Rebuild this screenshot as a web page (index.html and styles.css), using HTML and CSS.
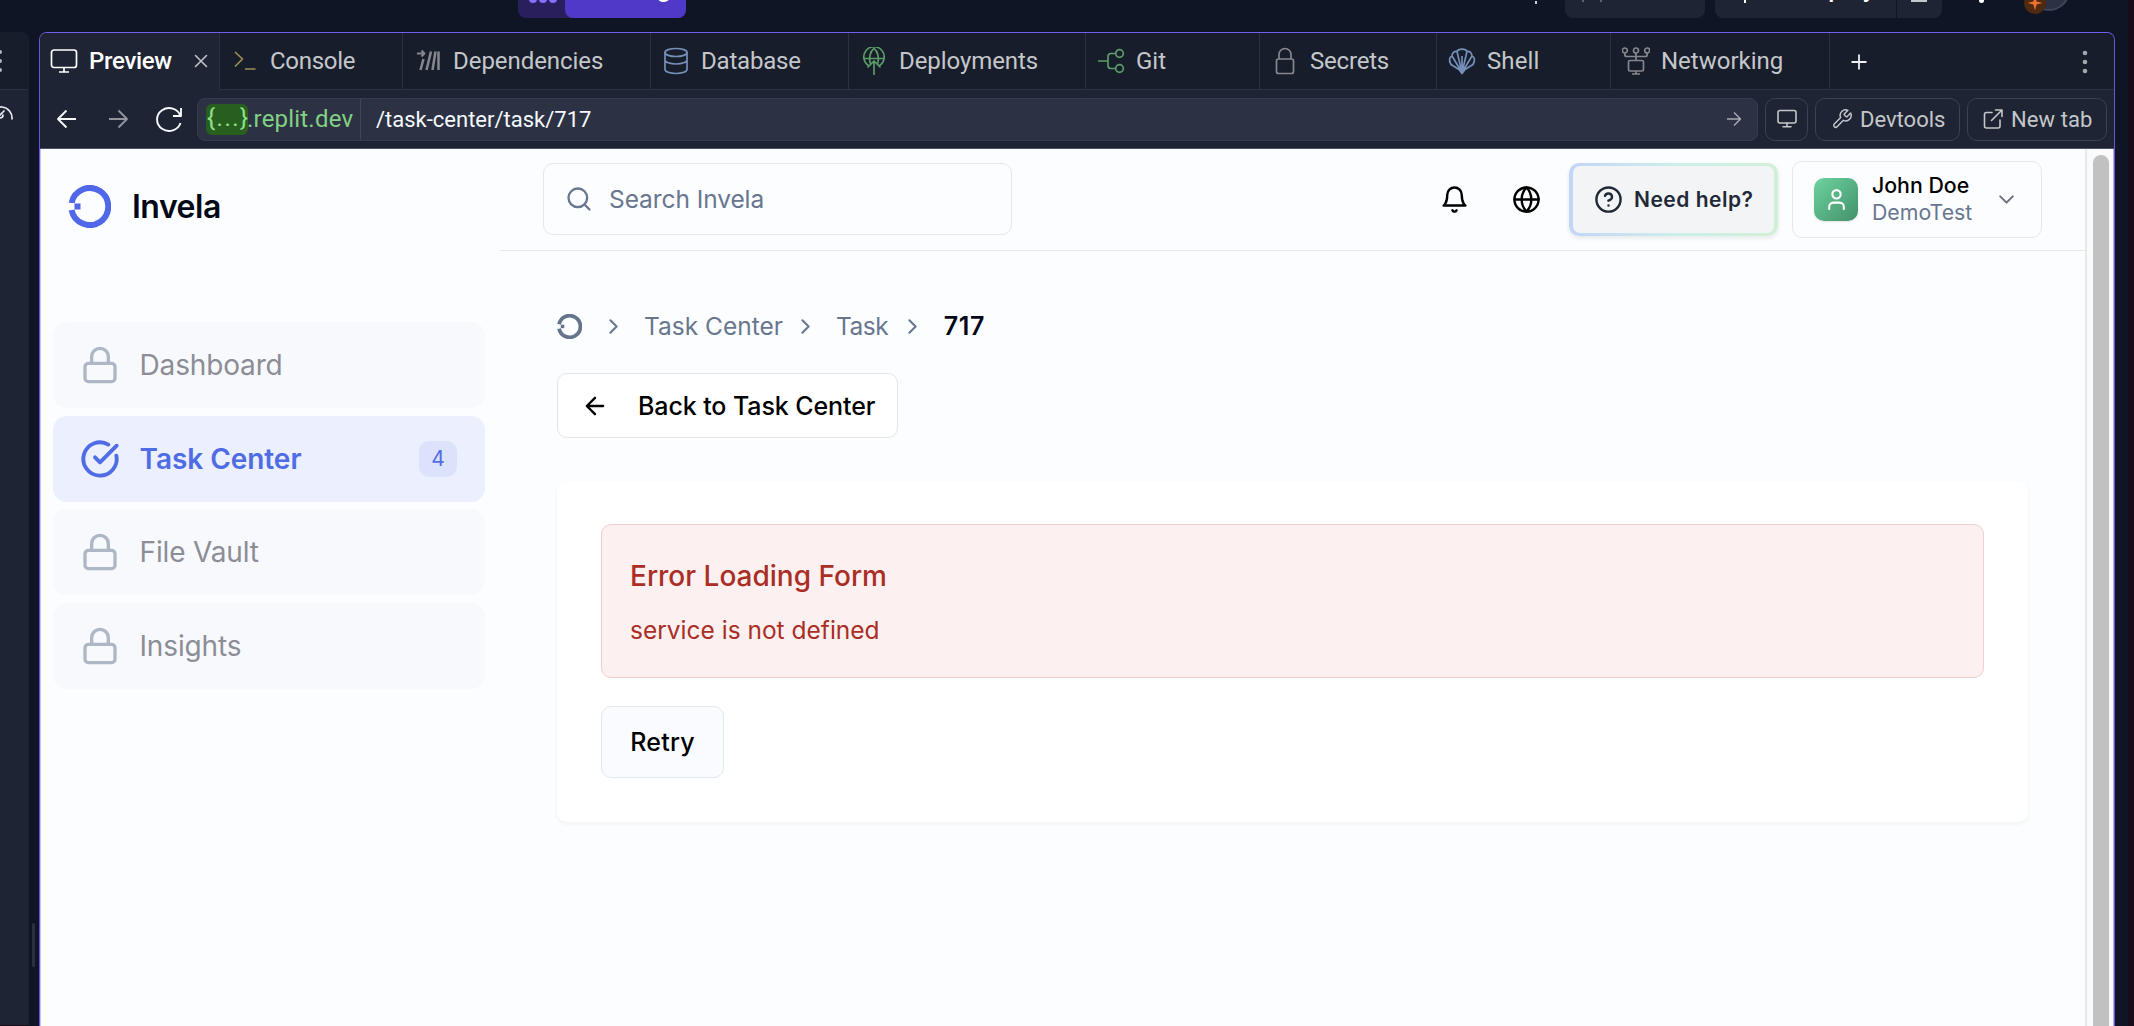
FILE: index.html
```html
<!DOCTYPE html>
<html lang="en">
<head>
<meta charset="utf-8">
<title>Invela</title>
<link rel="stylesheet" href="styles.css">
</head>
<body>
<header class="topbar">
  <div class="run">
    <span class="run-dots"><i></i><i></i><i></i></span>
    <span class="run-label">Running</span>
  </div>
  <span class="top-tick"></span>
  <div class="top-btn invite"><span class="tick"></span><span class="tick"></span></div>
  <div class="top-btn deploy"><span class="stem"></span><span class="deploy-label">Deploy</span></div>
  <div class="top-btn layout"><span class="bar"></span></div>
  <span class="top-dot"></span>
  <div class="account">
    <span class="account-face"></span>
    <svg class="account-badge" width="22" height="22" viewBox="0 0 22 22"><circle cx="11" cy="11" r="11" fill="#4d2a10"/><path d="M11 3.500l1.600 5.900 5.900 1.600-5.900 1.600L11 18.500l-1.600-5.900L3.500 11l5.900-1.600z" fill="#f0702e"/></svg>
  </div>
</header>

<div class="workspace">
  <aside class="dock">
    <div class="dock-head"><i></i><i></i><i></i></div>
    <svg class="dock-icon" width="13" height="20" viewBox="0 0 13 20"><path d="M-10 12a11 11 0 0 1 22 2M-4 14L4 6M0 13c2 0 3-1 3-3"/></svg>
  </aside>
  <div class="gutter"><span class="handle"></span></div>

  <section class="pane">
    <nav class="tabs">
      <div class="tab active t-preview">
        <svg class="ti" viewBox="0 0 28 28"><rect x="1.500" y="3" width="25" height="17.500" rx="2.500"/><path d="M14 20.500v4.500M9 25h10"/></svg>
        <span class="s-preview">Preview</span>
        <svg class="close" viewBox="0 0 14 14"><path d="M1.500 1.500l11 11M12.500 1.500l-11 11"/></svg>
      </div>
      <div class="tab t-console">
        <svg class="ti olive" viewBox="0 0 28 28"><path d="M4 5l7.500 7L4 19.500M14 22h10.500"/></svg>
        <span class="s-console">Console</span>
      </div>
      <div class="tab t-deps">
        <svg class="ti gray" viewBox="0 0 28 28"><path stroke-width="1.800" d="M3 6.500h7M7.500 3.500l3 3-3 3"/><path stroke-width="2.500" d="M9.500 12L6.500 23M17 4.500L12.500 23M21.500 4.500L18.500 23M24.500 4.500V23"/></svg>
        <span class="s-deps">Dependencies</span>
      </div>
      <div class="tab t-db">
        <svg class="ti blue" viewBox="0 0 28 28"><ellipse cx="14" cy="5.500" rx="11" ry="4"/><path d="M3 5.500v17c0 2.200 4.900 4 11 4s11-1.800 11-4v-17M3 13c0 2.200 4.900 4 11 4s11-1.800 11-4"/></svg>
        <span class="s-db">Database</span>
      </div>
      <div class="tab t-deploy">
        <svg class="ti green" viewBox="0 0 28 28"><path d="M8.500 18.500A10.200 10.200 0 1 1 19.500 18.500M4 11.500h20M10.300 16.500C8.600 10 10.500 4 14 1.300c3.500 2.700 5.400 8.700 3.700 15.200M14 14.500V28M7.500 20.500l6.500-6.500 6.500 6.500"/></svg>
        <span class="s-deploy">Deployments</span>
      </div>
      <div class="tab t-git">
        <svg class="ti green" viewBox="0 0 28 28"><circle cx="22.500" cy="6.500" r="3.800"/><circle cx="22.500" cy="21.500" r="3.800"/><path d="M1 14h10M18.700 6.500H14a3 3 0 0 0-3 3v9a3 3 0 0 0 3 3h4.700"/></svg>
        <span>Git</span>
      </div>
      <div class="tab t-secrets">
        <svg class="ti gray" viewBox="0 0 28 28"><rect x="5.500" y="12" width="17" height="14.500" rx="2"/><path d="M8 12V7.500a6 6 0 0 1 12 0V12"/></svg>
        <span class="s-secrets">Secrets</span>
      </div>
      <div class="tab t-shell">
        <svg class="ti blue" viewBox="0 0 28 28"><path d="M11 22.500L3 17.500C.5 13 1.500 10 4 9c.3-3 2-5 5-4.500C10.500 1.300 17.500 1.300 19 4.500c3-.5 4.700 1.500 5 4.500 2.500 1 3.500 4 1 8.500l-8 5L14 26.500zM14 25.500L4 9M14 25.500L9 4.500M14 25.500L19 4.500M14 25.500L24 9M14 25V9"/></svg>
        <span class="s-shell">Shell</span>
      </div>
      <div class="tab t-net">
        <svg class="ti gray" viewBox="0 0 28 28"><circle cx="2.800" cy="3.500" r="2.500"/><circle cx="14" cy="3.500" r="2.500"/><circle cx="25.200" cy="3.500" r="2.500"/><path d="M2.800 6v1.500a2 2 0 0 0 2 2h18.400a2 2 0 0 0 2-2V6M14 6v7.500M14 24v3M10 27h8"/><rect x="6.500" y="13.500" width="15" height="10.500" rx="1.500"/></svg>
        <span>Networking</span>
      </div>
      <svg class="plus" viewBox="0 0 18 18"><path d="M9 1.500v15M1.500 9h15"/></svg>
      <svg class="kebab" viewBox="0 0 6 24"><circle cx="3" cy="3" r="2.300"/><circle cx="3" cy="12" r="2.300"/><circle cx="3" cy="21" r="2.300"/></svg>
    </nav>

    <div class="toolbar">
      <span class="nav-btn"><svg width="22" height="22" viewBox="0 0 22 22"><path d="M20 11H2.500M10.500 2.500L2 11l8.500 8.500"/></svg></span>
      <span class="nav-btn dim"><svg width="22" height="22" viewBox="0 0 22 22"><path d="M2 11h17.500M11.500 2.500L20 11l-8.500 8.500"/></svg></span>
      <span class="nav-btn"><svg width="28" height="28" viewBox="0 0 28 28"><path d="M26 3v8h-8M25.500 11A12 11.500 0 1 0 25.500 18"/></svg></span>
      <div class="url">
        <div class="host"><span class="chip">{...}</span><span class="domain">.replit.dev</span></div>
        <span class="path">/task-center/task/717</span>
        <svg class="go" width="16" height="16" viewBox="0 0 16 16"><path d="M1 8h13.500M8 1.500L14.500 8 8 14.500"/></svg>
      </div>
      <div class="tool device"><svg width="22" height="22" viewBox="0 0 22 22"><rect x="2" y="2.500" width="18" height="12.500" rx="2"/><path d="M11 15v3.500M7 18.800h8"/></svg></div>
      <div class="tool devtools"><svg width="22" height="22" viewBox="0 0 24 24"><path d="M14.700 6.300a1 1 0 0 0 0 1.400l1.600 1.600a1 1 0 0 0 1.400 0l3.770-3.770a6 6 0 0 1-7.940 7.940l-6.910 6.910a2.120 2.120 0 0 1-3-3l6.910-6.910a6 6 0 0 1 7.940-7.940l-3.760 3.760z"/></svg><span>Devtools</span></div>
      <div class="tool newtab"><svg width="22" height="22" viewBox="0 0 22 22"><path d="M10 4.500H4.500a2 2 0 0 0-2 2V18a2 2 0 0 0 2 2H16a2 2 0 0 0 2-2v-6M13.500 2H20v6.500M20 2L9.500 12.500"/></svg><span>New tab</span></div>
    </div>

    <div class="page">
      <aside class="sidebar">
        <div class="brand">
          <svg width="43" height="43" viewBox="0 0 43 43"><path fill="none" stroke="#4f67e8" stroke-width="6" d="M3.600 18A18.500 18.500 0 1 1 3.600 25"/><path fill="#fcfdff" d="M0 18.300h6v6H0z"/><path fill="#4f67e8" d="M6.500 18.400h6v6h-6z"/></svg>
          <span>Invela</span>
        </div>
        <ul class="menu">
          <li><svg viewBox="0 0 24 24"><rect x="3" y="11" width="18" height="11" rx="2"/><path d="M7 11V7a5 5 0 0 1 10 0v4"/></svg><span>Dashboard</span></li>
          <li class="current"><svg viewBox="0 0 24 24"><path d="M21.801 10A10 10 0 1 1 17 3.335"/><path d="m9 11 3 3L22 4"/></svg><span>Task Center</span><b>4</b></li>
          <li><svg viewBox="0 0 24 24"><rect x="3" y="11" width="18" height="11" rx="2"/><path d="M7 11V7a5 5 0 0 1 10 0v4"/></svg><span>File Vault</span></li>
          <li><svg viewBox="0 0 24 24"><rect x="3" y="11" width="18" height="11" rx="2"/><path d="M7 11V7a5 5 0 0 1 10 0v4"/></svg><span>Insights</span></li>
        </ul>
      </aside>

      <main class="main">
        <header class="appbar">
          <div class="search">
            <svg width="28" height="28" viewBox="0 0 24 24"><circle cx="11" cy="11" r="8"/><path d="m21 21-4.300-4.300"/></svg>
            <span>Search Invela</span>
          </div>
          <svg class="bell" width="29" height="29" viewBox="0 0 24 24"><path d="M6 8a6 6 0 0 1 12 0c0 7 3 9 3 9H3s3-2 3-9"/><path d="M10.300 21a1.940 1.940 0 0 0 3.400 0"/></svg>
          <svg class="globe" width="29" height="29" viewBox="0 0 24 24"><circle cx="12" cy="12" r="10"/><path d="M12 2a14.500 14.500 0 0 0 0 20 14.500 14.500 0 0 0 0-20M2 12h20"/></svg>
          <div class="help">
            <div class="help-in">
              <svg width="29" height="29" viewBox="0 0 24 24"><circle cx="12" cy="12" r="10"/><path d="M9.090 9a3 3 0 0 1 5.830 1c0 2-3 3-3 3M12 17h.01"/></svg>
              <span>Need help?</span>
            </div>
          </div>
          <div class="user">
            <span class="avatar"><svg width="25" height="25" viewBox="0 0 24 24"><path d="M19 21v-2a4 4 0 0 0-4-4H9a4 4 0 0 0-4 4v2"/><circle cx="12" cy="7" r="4"/></svg></span>
            <div class="who"><span class="name">John Doe</span><span class="org">DemoTest</span></div>
            <svg class="chev" width="25" height="25" viewBox="0 0 24 24"><path d="m6 9 6 6 6-6"/></svg>
          </div>
        </header>

        <div class="content">
          <div class="crumbs">
            <svg class="crumb-logo" width="25" height="25" viewBox="0 0 43 43"><path fill="none" stroke="#64748b" stroke-width="6.500" d="M3.600 18A18.500 18.500 0 1 1 3.600 25"/><path fill="#fcfdff" d="M0 18.300h6v6H0z"/><path fill="#64748b" d="M6.500 18.400h6v6h-6z"/></svg>
            <svg class="sep first" viewBox="0 0 24 24"><path d="m9 18 6-6-6-6"/></svg>
            <span>Task Center</span>
            <svg class="sep" viewBox="0 0 24 24"><path d="m9 18 6-6-6-6"/></svg>
            <span class="s-task">Task</span>
            <svg class="sep last" viewBox="0 0 24 24"><path d="m9 18 6-6-6-6"/></svg>
            <strong>717</strong>
          </div>
          <div class="back"><svg width="28" height="28" viewBox="0 0 24 24"><path d="m12 19-7-7 7-7M19 12H5"/></svg><span>Back to Task Center</span></div>
          <div class="card">
            <div class="error">
              <h2>Error Loading Form</h2>
              <p>service is not defined</p>
            </div>
            <div class="retry">Retry</div>
          </div>
        </div>
      </main>
      <div class="track"><span class="thumb"></span></div>
    </div>
  </section>

  <div class="gutter-right"></div>
  <div class="edge"></div>
</div>
</body>
</html>
```
FILE: styles.css
```css
* { box-sizing: border-box; margin: 0; padding: 0; }
svg { display: block; flex: none; fill: none; stroke: currentColor; stroke-width: 2; stroke-linecap: round; stroke-linejoin: round; }
body { width: 2134px; height: 1026px; overflow: hidden; background: #0f1524; font-family: Inter, sans-serif; display: flex; flex-direction: column; }

.topbar { height: 32px; flex: none; display: flex; align-items: flex-end; padding: 0 0 14px 518px; overflow: hidden; background: #0f1524; border-right: 6px solid #180c18; }
.run { display: flex; width: 168px; height: 56px; border-radius: 8px; background: #281f5c; margin-right: 849px; }
.run-dots { width: 47px; display: flex; align-items: flex-end; gap: 2px; padding: 0 0 15px 11px; }
.run-dots i { width: 8px; height: 8px; border-radius: 50%; background: #8570ff; }
.run-label { width: 121px; border-radius: 8px; background: #5039c6; color: #fff; font: 700 25px/34px Roboto, sans-serif; padding: 10px 15px 0 0; text-align: right; }
.top-tick { width: 2px; height: 17px; background: linear-gradient(#c8ccd6 3px, transparent 3px); margin-right: 28px; }
.top-btn { height: 56px; background: #1e2433; display: flex; flex: none; }
.invite { width: 140px; border-radius: 8px; margin-right: 10px; align-items: flex-end; padding: 0 0 16px 17px; gap: 16px; }
.tick { width: 2px; height: 3px; background: #5c6270; }
.deploy { width: 181px; border-radius: 8px 0 0 8px; margin-right: 1px; color: #fff; font: 500 25px/34px Roboto, sans-serif; padding: 0 21px 0 29px; justify-content: space-between; }
.deploy-label { padding-top: 10px; }
.stem { width: 2px; height: 41px; background: #fff; }
.layout { width: 45px; border-radius: 0 8px 8px 0; align-items: flex-end; padding: 0 0 16px 14px; }
.bar { width: 16px; height: 3px; background: #c2c8cc; }
.top-dot { width: 5px; height: 5px; border-radius: 50%; background: #fff; margin: 0 0 15px 37px; }
.account { display: flex; margin-left: 40px; align-items: flex-end; flex-direction: row-reverse; }
.account-face { width: 42px; height: 42px; margin: 0 0 7px -18px; border-radius: 50%; background: #2c3144; border: 2px solid #3f465c; }
.account-badge { position: relative; z-index: 1; stroke: none; margin-bottom: 4px; }

.workspace { flex: 1; display: flex; min-height: 0; }
.dock { width: 29px; background: #1e2433; border-right: 1px solid #1a202e; border-bottom: 1px solid #180c18; border-radius: 0 8px 0 0; overflow: hidden; }
.dock-head { height: 58px; background: #181d2b; border-bottom: 1px solid #2b3142; display: flex; flex-direction: column; justify-content: center; gap: 5px; }
.dock-head i { width: 4px; height: 4px; margin-left: -2px; border-radius: 50%; background: #b5b8c0; }
.dock-icon { margin-top: 15px; color: #e8eaf0; stroke-width: 1.700; }
.gutter { width: 10px; padding: 891px 0 0 3px; }
.handle { display: block; width: 3px; height: 44px; border-radius: 2px; background: #2a3042; }
.gutter-right { width: 13px; }
.edge { width: 6px; background: #180c18; }

.pane { width: 2076px; border: 1px solid #6955d8; border-top-color: #735fee; border-bottom: 0; border-radius: 8px 8px 0 0; overflow: hidden; display: flex; flex-direction: column; background: #1e2433; }

.tabs { height: 57px; flex: none; display: flex; background: #181d2b; font: 24px Roboto, sans-serif; color: #c4c7ca; box-shadow: inset 0 -1px #2b3142; }
.tab { display: flex; align-items: center; padding-left: 11px; gap: 11px; flex: none; border-right: 1px solid #2b3142; border-bottom: 1px solid #2b3142; }
.tab > span { white-space: nowrap; }
.tab.active { background: #1e2433; border-bottom-color: #1e2433; color: #fff; padding-left: 10px; }
.ti { width: 28px; height: 28px; stroke-width: 1.700; stroke-linecap: butt; }
.olive { color: #9a9052; } .gray { color: #85878e; } .blue { color: #7590b8; } .green { color: #5b9c68; }
.t-preview { width: 180px; } .t-console { width: 183px; } .t-deps { width: 248px; } .t-db { width: 198px; } .t-deploy { width: 237px; } .t-git { width: 174px; } .t-secrets { width: 177px; } .t-shell { width: 174px; } .t-net { width: 219px; }
.s-preview { letter-spacing: -.3px; font-weight: 500; width: 94px; }
.s-console { letter-spacing: -.3px; } .s-deps { letter-spacing: -.05px; } .s-db { letter-spacing: -.2px; } .s-deploy { letter-spacing: -.07px; } .s-secrets { letter-spacing: -.2px; } .s-shell { letter-spacing: .1px; }
.close { width: 14px; height: 14px; stroke-width: 1.600; color: #c0c3c9; }
.plus { width: 18px; height: 18px; margin-left: 20px; align-self: center; color: #eef0f3; stroke-width: 1.800; stroke-linecap: butt; }
.kebab { width: 6px; height: 24px; margin: 0 26px 0 auto; align-self: center; fill: #a4a7ae; stroke: none; }

.toolbar { height: 59px; flex: none; display: flex; align-items: center; padding: 0 0 0 1px; border-bottom: 1px solid #4a5163; font-family: Roboto, sans-serif; color: #c4c7ca; }
.nav-btn { width: 51px; height: 42px; display: flex; align-items: center; justify-content: center; color: #f5f9fc; }
.nav-btn svg { stroke-width: 1.900; stroke-linecap: butt; }
.nav-btn.dim { color: #91949c; }
.url { width: 1561px; height: 43px; margin: 0 7px 0 3px; border: 1px solid #363c50; border-radius: 8px; background: #2c3144; display: flex; align-items: center; }
.host { width: 163px; height: 41px; border-right: 1px solid #40465a; display: flex; align-items: center; padding-left: 8px; font-size: 24px; color: #83d183; }
.chip { width: 42px; height: 31px; line-height: 29px; border-radius: 6px; background: #285f1f; color: #8fe08a; text-align: center; letter-spacing: 1.500px; text-indent: 1px; }
.domain { letter-spacing: .2px; margin-left: -1px; }
.path { color: #f5f9fc; font-size: 22px; margin-left: 15px; }
.go { margin: 0 15px 0 auto; stroke-width: 1.400; color: #a8abb4; stroke-linecap: butt; }
.tool { height: 43px; border: 1px solid #3b4156; border-radius: 10px; display: flex; align-items: center; margin-right: 7px; font-size: 22px; }
.tool svg { stroke-width: 1.600; }
.device { width: 43px; justify-content: center; }
.devtools { width: 145px; padding-left: 15px; gap: 7px; }
.newtab { width: 140px; padding-left: 14px; gap: 7px; letter-spacing: .1px; }

.page { flex: 1; display: flex; min-height: 0; background: #fcfdff; border-left: 1px solid #c8befb; border-right: 1px solid #b3a8f0; }
.sidebar { width: 459px; flex: none; padding: 36px 15px 0 12px; }
.brand { display: flex; align-items: center; gap: 21px; height: 43px; padding-left: 15px; font-size: 32px; font-weight: 600; letter-spacing: -.5px; color: #020817; }
.brand svg { stroke-linecap: butt; stroke: none; }
.menu { list-style: none; display: flex; flex-direction: column; gap: 7.300px; margin-top: 94px; }
.menu li { height: 86.300px; border-radius: 14px; background: #f8f9fd; display: flex; align-items: center; padding-left: 27px; gap: 19.500px; font-size: 28px; letter-spacing: -.15px; color: #8c8d96; }
.menu svg { width: 40px; height: 40px; color: #aeb7c5; }
.menu .current { background: #ebeffe; color: #506ce5; font-weight: 600; letter-spacing: -.05px; padding-right: 28px; }
.menu .current svg { color: #506ce5; stroke-width: 2.300; }
.menu b { margin-left: auto; width: 38px; height: 36px; border-radius: 10px; background: #dde2fb; font-size: 21px; font-weight: 400; line-height: 36px; text-align: center; }

.main { width: 1585px; flex: none; }
.appbar { height: 102px; border-bottom: 1px solid #e4e7eb; display: flex; align-items: center; padding: 0 43px; }
.search { width: 469px; height: 72px; border: 1px solid #e4e7eb; border-radius: 10px; display: flex; align-items: center; gap: 16px; padding-left: 21px; margin: 0 auto 1px 0; font-size: 24.500px; letter-spacing: -.08px; color: #68778f; }
.bell, .globe { color: #000; }
.bell { margin-right: 43px; }
.globe { margin-right: 28px; }
.help { width: 209px; height: 73px; padding: 3px 4px; border-radius: 10px; background: linear-gradient(90deg, #c3d4f9, #cdeeea 50%, #d0f0d6); box-shadow: 0 2px 5px rgba(0,0,0,.09); margin-right: 14px; }
.help-in { height: 67px; border-radius: 7px; background: #f3f4f6; display: flex; align-items: center; gap: 11px; padding-left: 21px; color: #1f2937; font-size: 21px; font-weight: 600; letter-spacing: .5px; white-space: nowrap; }
.user { width: 250px; height: 77px; border: 1px solid #e4e7eb; border-radius: 10px; display: flex; align-items: center; padding-left: 21px; }
.avatar { width: 44px; height: 43px; border-radius: 10px; background: linear-gradient(135deg, #6dd3a0, #43916a); display: flex; align-items: center; justify-content: center; color: #fff; box-shadow: 0 1px 2px rgba(0,0,0,.1); }
.who { display: flex; flex-direction: column; width: 118px; margin: -1px 0 0 14px; }
.who span { line-height: 27px; font-size: 21.300px; white-space: nowrap; }
.name { font-weight: 500; color: #000; }
.org { color: #68778f; }
.chev { color: #6b7280; margin-left: 4px; }

.content { padding: 57px 57px 0 57px; }
.crumbs { height: 36px; display: flex; align-items: center; font-size: 24.500px; color: #68778f; margin-bottom: 29px; }
.crumb-logo { stroke-linecap: butt; stroke: none; }
.sep { width: 25px; height: 25px; margin: 0 18px 0 10px; }
.sep.first { margin-left: 19px; }
.sep.last { margin: 0 18.500px 0 12px; }
.s-task { letter-spacing: -.5px; }
.crumbs strong { font-weight: 600; color: #020817; font-size: 25px; letter-spacing: .7px; }
.back { width: 341px; height: 65px; border: 1px solid #e2e4e8; border-radius: 10px; background: #fff; display: flex; align-items: center; padding-left: 23px; gap: 29px; font-size: 25px; font-weight: 500; letter-spacing: -.1px; color: #000; margin-bottom: 43px; }
.card { background: #fff; border-radius: 10px; box-shadow: 0 2px 4px rgba(0,0,0,.05); height: 341px; padding: 43px 44px 0 44px; }
.error { height: 154px; border: 1px solid #f3cccc; border-radius: 10px; background: #fcf1f0; padding: 31px 28px; color: #aa2e25; margin-bottom: 28px; }
.error h2 { font-size: 28px; line-height: 40px; font-weight: 500; }
.error p { font-size: 24.500px; line-height: 36px; margin-top: 16px; }
.retry { width: 123px; height: 72px; border: 1px solid #e2e8f0; border-radius: 10px; background: #fafbff; font-size: 25px; font-weight: 500; line-height: 70px; text-align: center; letter-spacing: .2px; color: #000; }
.track { width: 28px; flex: none; background: #fafafa; border-left: 2px solid #e8e8e8; padding: 6px 4px 0 6px; }
.thumb { display: block; width: 16px; height: 900px; border-radius: 8px; background: #c1c1c1; }
```
